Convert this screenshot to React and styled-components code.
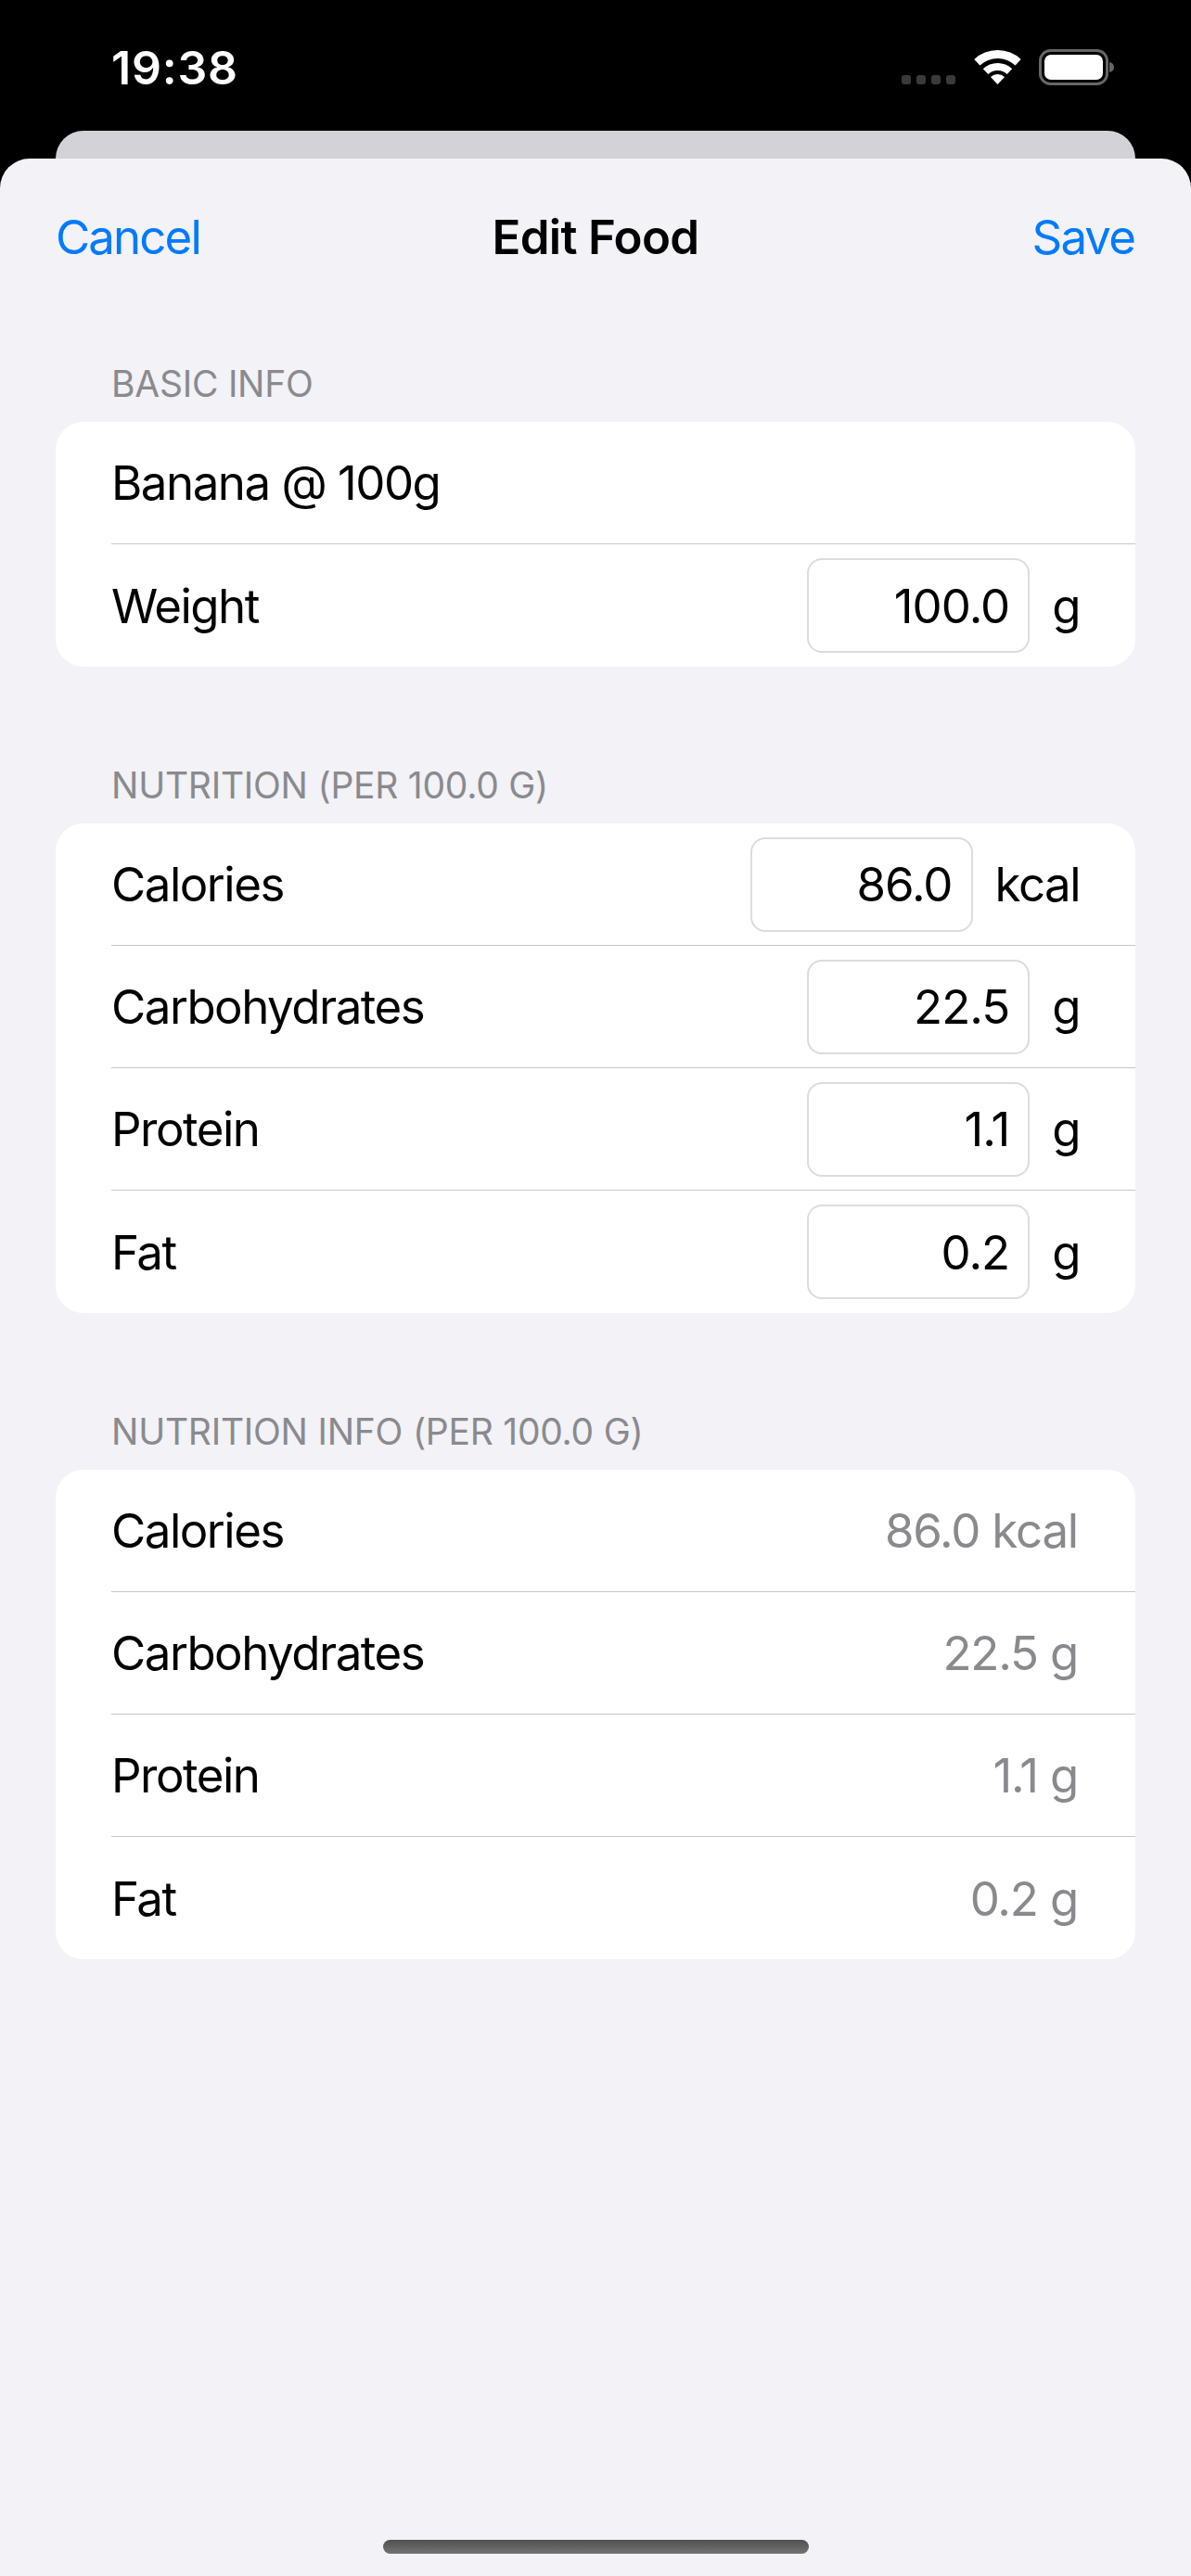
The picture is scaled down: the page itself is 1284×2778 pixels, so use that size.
import React from "react";
import styled, { createGlobalStyle } from "styled-components";

const Global = createGlobalStyle`
  html, body { margin: 0; padding: 0; background: #000; }
  body { font-family: Inter, "Liberation Sans", sans-serif; -webkit-font-smoothing: antialiased; }
  * { box-sizing: border-box; }
`;

const Screen = styled.div`
  width: 1284px;
  height: 2778px;
  display: flex;
  flex-direction: column;
  background: #000;
  overflow: hidden;
`;

const StatusBar = styled.div`
  height: 141px;
  flex: none;
  display: flex;
  justify-content: space-between;
  align-items: flex-start;
  padding: 52px 82px 0 120px;
`;

const Time = styled.div`
  color: #fff;
  font-size: 50px;
  line-height: 42px;
  font-weight: 600;
  letter-spacing: 0.8px;
`;

const StatusIcons = styled.div`
  display: flex;
  align-items: flex-end;
  height: 40px;
`;

const Dots = styled.div`
  display: flex;
  gap: 6px;
  margin: 0 20px 1px 0;
`;

const Dot = styled.span`
  width: 10px;
  height: 10px;
  border-radius: 3px;
  background: #3a3a3c;
`;

const Wifi = styled.svg`
  width: 51px;
  height: 37px;
  margin: 0 19px 1px 0;
  display: block;
`;

const Battery = styled.svg`
  width: 82px;
  height: 39px;
  display: block;
`;

const BackCard = styled.div`
  flex: none;
  height: 30px;
  margin: 0 60px;
  background: #d2d2d7;
  border-radius: 30px 30px 0 0;
`;

const Sheet = styled.div`
  flex: 1;
  display: flex;
  flex-direction: column;
  background: #f2f2f7;
  border-radius: 32px 32px 0 0;
`;

const NavBar = styled.div`
  flex: none;
  height: 168px;
  margin-bottom: 51px;
  padding: 0 60px;
  display: flex;
  align-items: center;
  justify-content: space-between;
  font-size: 51px;
`;

const NavAction = styled.div`
  color: #007aff;
  letter-spacing: -1.9px;
  width: 220px;
  text-align: ${(p) => (p.$end ? "right" : "left")};
  padding-right: ${(p) => (p.$end ? "1px" : "0")};
`;

const NavTitle = styled.div`
  color: #000;
  font-weight: 600;
  letter-spacing: -0.7px;
`;

const Section = styled.section`
  margin: 0 60px 104px;
`;

const SectionHeader = styled.div`
  height: 48px;
  line-height: 48px;
  margin: 0 0 17px 60px;
  font-size: 39px;
  color: #8a8a8e;
  letter-spacing: -0.25px;
`;

const Card = styled.div`
  background: #fff;
  border-radius: 30px;
  overflow: hidden;
`;

const Row = styled.div`
  height: 132px;
  margin-left: 60px;
  padding-right: 60px;
  display: flex;
  align-items: center;
  justify-content: space-between;
  font-size: 51px;
  letter-spacing: -1.5px;
  color: #000;
  border-bottom: ${(p) => (p.$last ? "none" : "1px solid #c6c6c8")};
`;

const Field = styled.div`
  display: flex;
  align-items: center;
  gap: 24px;
`;

const Box = styled.div`
  width: 240px;
  height: 102px;
  border: 2px solid #dcdce0;
  border-radius: 16px;
  padding-right: 20px;
  display: flex;
  align-items: center;
  justify-content: flex-end;
  letter-spacing: -1px;
`;

const ReadOnly = styled.div`
  color: #8a8a8e;
  letter-spacing: -1.2px;
  margin-right: 2px;
`;

const HomeIndicator = styled.div`
  width: 459px;
  height: 15px;
  margin: auto auto 24px;
  border-radius: 8px;
  background: linear-gradient(#505050, #737373);
`;

const edit = [
  ["Calories", "86.0", "kcal"],
  ["Carbohydrates", "22.5", "g"],
  ["Protein", "1.1", "g"],
  ["Fat", "0.2", "g"],
];

export default function App() {
  return (
    <Screen>
      <Global />
      <StatusBar>
        <Time>19:38</Time>
        <StatusIcons>
          <Dots>
            <Dot /><Dot /><Dot /><Dot />
          </Dots>
          <Wifi viewBox="0 0 51 37" fill="#fff">
            <path d="M.3 9.95A37 37 0 0 1 50.7 9.95L44.6 16.5A28 28 0 0 0 6.4 16.5Z" />
            <path d="M9.8 20.2A23 23 0 0 1 41.2 20.2L35.7 26A15 15 0 0 0 15.3 26Z" />
            <path d="M18 29A11 11 0 0 1 33 29L25.5 37Z" />
          </Wifi>
          <Battery viewBox="0 0 82 39">
            <rect x="1.5" y="1.5" width="72" height="36" rx="11" fill="none" stroke="#666" strokeWidth="3" />
            <rect x="6" y="6" width="63" height="27" rx="7" fill="#fff" />
            <path d="M76 14c3 .5 5 2.5 5 5.500s-2 5-5 5.500z" fill="#666" />
          </Battery>
        </StatusIcons>
      </StatusBar>
      <BackCard />
      <Sheet>
        <NavBar>
          <NavAction>Cancel</NavAction>
          <NavTitle>Edit Food</NavTitle>
          <NavAction $end>Save</NavAction>
        </NavBar>
        <Section>
          <SectionHeader>BASIC INFO</SectionHeader>
          <Card>
            <Row>Banana @ 100g</Row>
            <Row $last>
              Weight
              <Field>
                <Box>100.0</Box>
                g
              </Field>
            </Row>
          </Card>
        </Section>
        <Section>
          <SectionHeader>NUTRITION (PER 100.0 G)</SectionHeader>
          <Card>
            {edit.map(([label, value, unit], i) => (
              <Row key={label} $last={i === edit.length - 1}>
                {label}
                <Field>
                  <Box>{value}</Box>
                  {unit}
                </Field>
              </Row>
            ))}
          </Card>
        </Section>
        <Section>
          <SectionHeader>NUTRITION INFO (PER 100.0 G)</SectionHeader>
          <Card>
            {edit.map(([label, value, unit], i) => (
              <Row key={label} $last={i === edit.length - 1}>
                {label}
                <ReadOnly>{value} {unit}</ReadOnly>
              </Row>
            ))}
          </Card>
        </Section>
        <HomeIndicator />
      </Sheet>
    </Screen>
  );
}
